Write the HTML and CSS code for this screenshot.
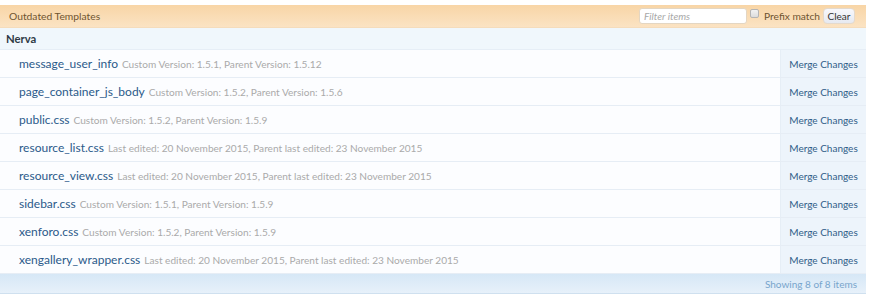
FILE: index.html
```html
<!DOCTYPE html>
<html>
<head>
<meta charset="utf-8">
<link rel="stylesheet" href="styles.css">
</head>
<body>
<div class="panel">
  <div class="head">
    <h3 class="title">Outdated Templates</h3>
    <div class="filter">
      <input class="filter-input" type="text" placeholder="Filter items">
      <label class="prefix"><span class="check"></span>Prefix match</label>
      <button class="clear">Clear</button>
    </div>
  </div>
  <div class="group">Nerva</div>
  <ul class="list">
    <li class="row"><div class="main"><a class="name">message_user_info</a><span class="meta">Custom Version: 1.5.1, Parent Version: 1.5.12</span></div><a class="merge">Merge Changes</a></li>
    <li class="row"><div class="main"><a class="name">page_container_js_body</a><span class="meta">Custom Version: 1.5.2, Parent Version: 1.5.6</span></div><a class="merge">Merge Changes</a></li>
    <li class="row"><div class="main"><a class="name">public.css</a><span class="meta">Custom Version: 1.5.2, Parent Version: 1.5.9</span></div><a class="merge">Merge Changes</a></li>
    <li class="row"><div class="main"><a class="name">resource_list.css</a><span class="meta">Last edited: 20 November 2015, Parent last edited: 23 November 2015</span></div><a class="merge">Merge Changes</a></li>
    <li class="row"><div class="main"><a class="name">resource_view.css</a><span class="meta">Last edited: 20 November 2015, Parent last edited: 23 November 2015</span></div><a class="merge">Merge Changes</a></li>
    <li class="row"><div class="main"><a class="name">sidebar.css</a><span class="meta">Custom Version: 1.5.1, Parent Version: 1.5.9</span></div><a class="merge">Merge Changes</a></li>
    <li class="row"><div class="main"><a class="name">xenforo.css</a><span class="meta">Custom Version: 1.5.2, Parent Version: 1.5.9</span></div><a class="merge">Merge Changes</a></li>
    <li class="row"><div class="main"><a class="name">xengallery_wrapper.css</a><span class="meta">Last edited: 20 November 2015, Parent last edited: 23 November 2015</span></div><a class="merge">Merge Changes</a></li>
  </ul>
  <div class="foot">Showing 8 of 8 items</div>
</div>
</body>
</html>
```
FILE: styles.css
```css
html, body {
  background: #ffffff;
}
body {
  margin: 5px 5px 0 0;
  font-family: Lato, "Liberation Sans", sans-serif;
  font-size: 11px;
  color: #333;
}
.panel {
  display: flex;
  flex-direction: column;
}
.head {
  height: 23px;
  box-sizing: border-box;
  display: flex;
  align-items: center;
  justify-content: space-between;
  padding: 0 11px 0 9px;
  background: linear-gradient(#f8d5a6, #fbe3c3);
  border-bottom: 1px solid #f5dcbb;
}
.title {
  margin: 0;
  font-size: 10.3px;
  font-weight: normal;
  color: #6f5430;
}
.filter {
  display: flex;
  align-items: center;
}
.filter-input {
  width: 108px;
  height: 16px;
  box-sizing: border-box;
  border: 1px solid #e4d6c2;
  border-radius: 3px;
  background: #fff;
  padding: 0 4px;
  font-family: inherit;
  font-size: 10px;
  font-style: italic;
  margin: 0 3px 0 0;
}
.filter-input::placeholder {
  color: #a8a8a8;
}
.prefix {
  display: flex;
  align-items: center;
  color: #6f5430;
  font-size: 10.2px;
}
.check {
  width: 9px;
  height: 9px;
  box-sizing: border-box;
  border: 1px solid #b4b4b4;
  border-radius: 2px;
  background: linear-gradient(#f2f2f2, #dcdcdc);
  margin: -6px 5px 0 0;
}
.clear {
  margin-left: 3px;
  width: 32px;
  height: 16px;
  padding: 0;
  border: 1px solid #e4d9cc;
  border-radius: 4px;
  background: linear-gradient(#f8f8fc, #e6e9f0);
  font-family: inherit;
  font-size: 10px;
  color: #333;
}
.group {
  height: 22px;
  box-sizing: border-box;
  display: flex;
  align-items: center;
  padding-left: 6px;
  background: #f0f7fc;
  border-bottom: 1px solid #e6eef6;
  font-weight: bold;
  font-size: 11.3px;
  color: #2f3a46;
}
.list {
  list-style: none;
  margin: 0;
  padding: 0;
}
.row {
  height: 28px;
  box-sizing: border-box;
  display: flex;
  border-bottom: 1px solid #e6edf5;
  background: #fcfdff;
}
.main {
  flex: 1;
  display: flex;
  align-items: center;
  padding-left: 19px;
  white-space: nowrap;
}
.name {
  font-size: 12px;
  color: #2b5a8a;
}
.meta {
  margin-left: 4px;
  font-size: 10.1px;
  color: #aaaaaa;
}
.merge {
  width: 85px;
  display: flex;
  align-items: center;
  justify-content: center;
  background: #edf4fb;
  border-left: 1px solid #e6eef6;
  font-size: 10px;
  color: #2f5d88;
}
.foot {
  height: 20px;
  box-sizing: border-box;
  display: flex;
  align-items: center;
  justify-content: flex-end;
  padding-right: 9px;
  background: linear-gradient(#d6e7f6, #e7f1fa);
  border-bottom: 1px solid #cfe0ef;
  color: #78a5cc;
  font-size: 10px;
}
```
